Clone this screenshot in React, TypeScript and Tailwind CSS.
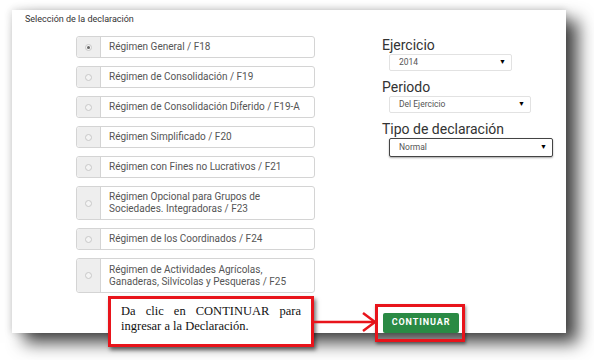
import React from "react";

const rows: { text: string[]; checked?: boolean; h: string }[] = [
  { text: ["Régimen General / F18"], checked: true, h: "h-[22px]" },
  { text: ["Régimen de Consolidación / F19"], h: "h-[22px]" },
  { text: ["Régimen de Consolidación Diferido / F19-A"], h: "h-[22px]" },
  { text: ["Régimen Simplificado / F20"], h: "h-[22px]" },
  { text: ["Régimen con Fines no Lucrativos / F21"], h: "h-[22px]" },
  { text: ["Régimen Opcional para Grupos de", "Sociedades. Integradoras / F23"], h: "h-[34px]" },
  { text: ["Régimen de los Coordinados / F24"], h: "h-[22px]" },
  { text: ["Régimen de Actividades Agrícolas,", "Ganaderas, Silvícolas y Pesqueras / F25"], h: "h-[35px]" },
];

function Radio({ checked }: { checked?: boolean }) {
  return (
    <span className="flex h-[7px] w-[7px] items-center justify-center rounded-full border border-[#c8c8c8] bg-[#f4f4f4]">
      {checked && <span className="h-[3px] w-[3px] rounded-full bg-[#666]" />}
    </span>
  );
}

function Select({ value, w, focus }: { value: string; w: string; focus?: boolean }) {
  return (
    <div
      className={`ml-[7px] flex items-center justify-between rounded-[2px] bg-white pl-[9px] pr-[5px] text-[8.5px] text-[#555] ${w} ${
        focus
          ? "h-[19px] border border-[#444] shadow-[0_1px_2px_rgba(0,0,0,0.35)]"
          : "h-[17px] border border-[#e2e2e2]"
      }`}
    >
      <span>{value}</span>
      <span className="text-[7px] text-black">▼</span>
    </div>
  );
}

export default function App() {
  return (
    <div className="relative h-[360px] w-[594px] overflow-hidden bg-white" style={{ fontFamily: "Roboto, 'Liberation Sans', sans-serif" }}>
      <div className="pl-[12px] pt-[10px]">
        <div className="flex h-[323px] w-[554px] flex-col bg-white shadow-[12px_10px_16px_rgba(0,0,0,0.72),0_0_8px_rgba(0,0,0,0.18)]">
          <div className="pl-[13px] pt-[3px] text-[9px] leading-[12px] text-[#333]">Selección de la declaración</div>
          <div className="flex flex-1">
            <div className="ml-[64px] mt-[11px] flex w-[239px] flex-col gap-[8px]">
              {rows.map((r, i) => (
                <div key={i} className={`flex rounded-[3px] border border-[#d4d4d4] ${r.h}`}>
                  <div className="flex w-[24px] items-center justify-center rounded-l-[3px] border-r border-[#d4d4d4] bg-[#eeeeee]">
                    <Radio checked={r.checked} />
                  </div>
                  <div className="flex flex-col justify-center pl-[8px] text-[10px] leading-[12px] text-[#555]">
                    {r.text.map((t, j) => (
                      <span key={j}>{t}</span>
                    ))}
                  </div>
                </div>
              ))}
            </div>
            <div className="ml-[67px] flex flex-1 flex-col">
              <div className="mt-[11px] text-[14px] leading-[18px] text-[#333]">Ejercicio</div>
              <Select value="2014" w="w-[123px]" />
              <div className="mt-[7px] text-[14px] leading-[18px] text-[#333]">Periodo</div>
              <Select value="Del Ejercicio" w="w-[142px]" />
              <div className="mt-[7px] text-[14px] leading-[18px] text-[#333]">Tipo de declaración</div>
              <Select value="Normal" w="w-[164px]" focus />
              <button className="ml-[1px] mt-auto flex h-[20px] w-[76px] items-center justify-center rounded-[2px] bg-[#2a8a44] text-[9px] font-bold tracking-[0.9px] text-white">
                CONTINUAR
              </button>
            </div>
          </div>
        </div>
      </div>

      {/* Annotation: callout */}
      <div
        className="absolute left-[108px] top-[296px] h-[51px] w-[206px] border-[3px] border-[#e8141b] bg-white px-[10px] pt-[5px] text-justify text-[12.5px] leading-[15px] text-[#111] shadow-[2px_3px_4px_rgba(0,0,0,0.55)]"
        style={{ fontFamily: "'Liberation Serif', serif", textAlignLast: "left" }}
      >
        <div style={{ textAlignLast: "justify" }}>Da clic en CONTINUAR para</div>
        <div>ingresar a la Declaración.</div>
      </div>

      {/* Annotation: arrow */}
      <svg className="absolute left-[314px] top-[310px]" width="64" height="24" viewBox="0 0 64 24">
        <line x1="0" y1="12" x2="60" y2="12" stroke="#e8141b" strokeWidth="2.5" />
        <polyline points="49,3 61,12 49,21" fill="none" stroke="#e8141b" strokeWidth="2.5" />
      </svg>

      {/* Annotation: box around button */}
      <div className="absolute left-[375px] top-[304px] h-[38px] w-[90px] border-[3px] border-[#e8141b] shadow-[1px_2px_3px_rgba(0,0,0,0.45)]" />
    </div>
  );
}
